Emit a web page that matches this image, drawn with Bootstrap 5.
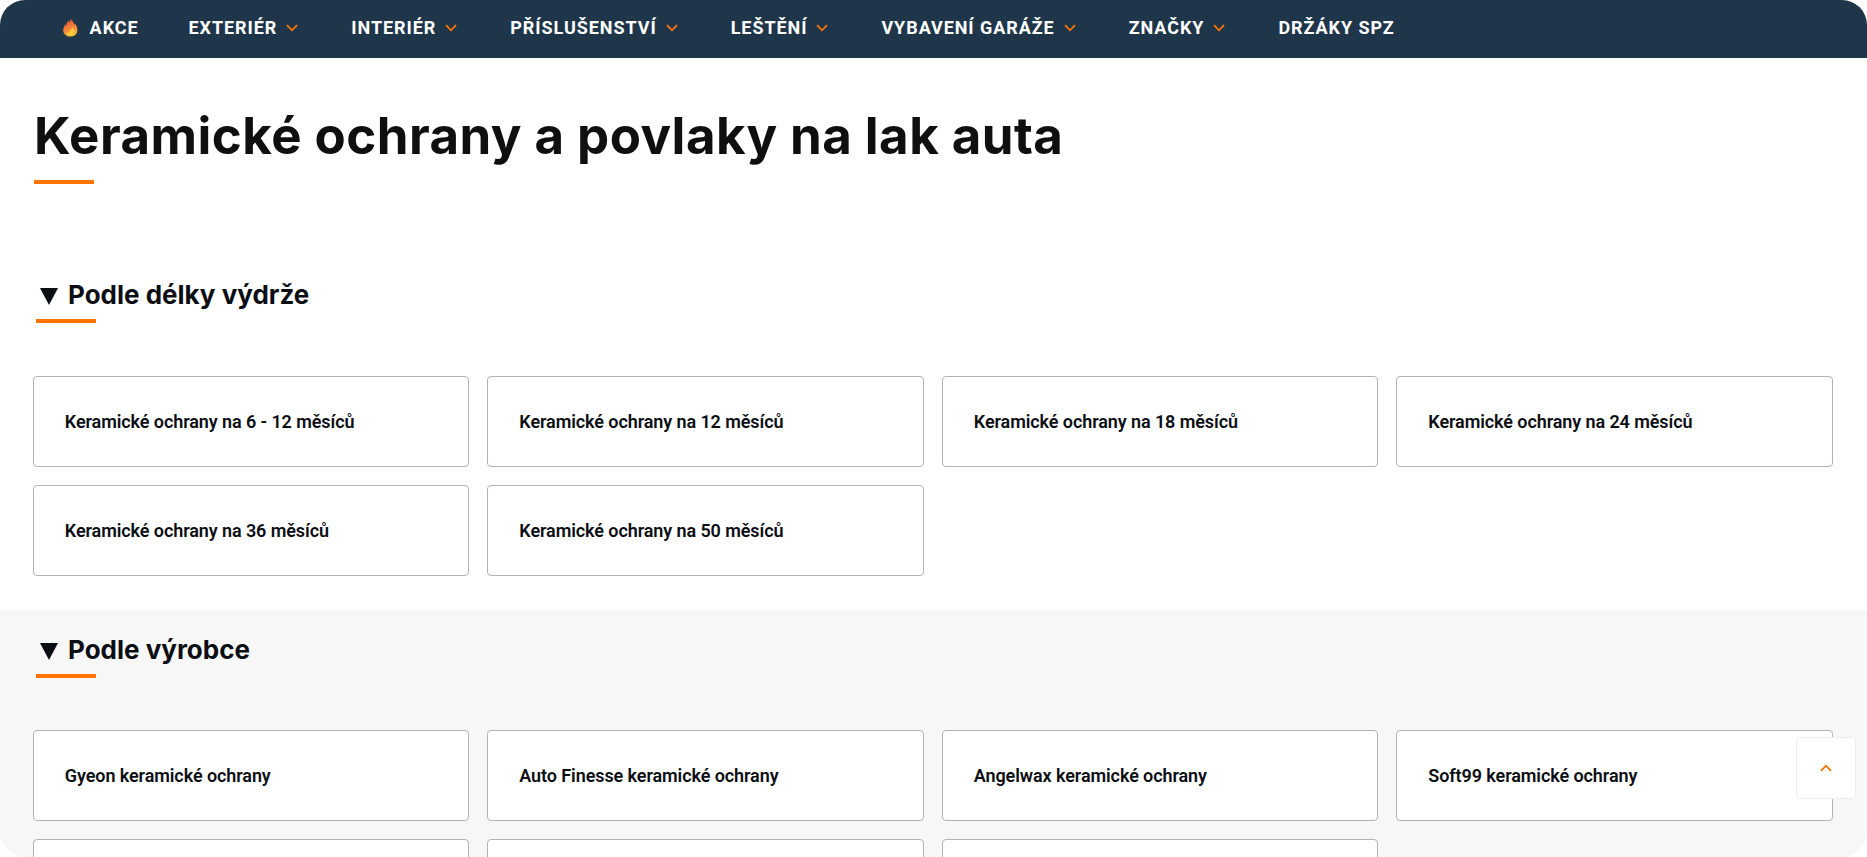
<!DOCTYPE html>
<html lang="cs">
<head>
<meta charset="utf-8">
<meta name="viewport" content="width=device-width, initial-scale=1">
<title>Keramické ochrany a povlaky na lak auta</title>
<link href="https://cdn.jsdelivr.net/npm/bootstrap@5.3.0/dist/css/bootstrap.min.css" rel="stylesheet">
<style>
body { background: #fff; font-family: Roboto, "Liberation Sans", sans-serif; color: #0b0e13; }
.page-shell { height: 857px; border-radius: 25px; }
.main-bar { background: #1f364a; height: 58px; padding: 0 0 0 38px; }
.main-bar .nav-link { color: #fff; font-size: 18px; font-weight: 700; line-height: 24px; letter-spacing: .94px; padding: 16px 25px 18px; white-space: nowrap; }
.chev { width: 12px; height: 8px; margin-left: 9px; margin-right: 3px; fill: none; stroke: #ff7300; stroke-width: 1.8; }
.flame { width: 15px; height: 18px; margin-right: 11.6px; }
.title-font { font-family: Inter, "Noto Sans", sans-serif; font-weight: 700; margin: 0; white-space: nowrap; }
.title-font::after { content: ""; display: block; width: 60px; height: 4px; background: #ff7300; }
h1.title-font { font-size: 51px; line-height: 60px; padding: 48px 0 0 34px; height: 202px; color: #0f0f0f; letter-spacing: .45px; }
h1.title-font::after { margin-top: 14px; }
h2.title-font { font-size: 26px; line-height: 36px; padding: 17px 0 0 36px; height: 116px; }
h2.title-font::after { margin-top: 6px; }
.group-alt h2.title-font { padding-top: 22px; height: 120.4px; }
.tri { width: 18px; height: 18px; margin: 0 10px 0 4px; fill: #0b0e13; }
.group-first { height: 350px; }
.group-alt { background: #f7f7f7; height: 247px; }
.tiles { --bs-gutter-x: 18px; --bs-gutter-y: 18px; margin-left: 23.5px; margin-right: 25.5px; }
.tile { height: 91px; border: 1px solid #b3b3b3; border-radius: 4px; padding: 0 31.3px; font-size: 18px; font-weight: 600; letter-spacing: -.09px; color: #0b0e13; }
.to-top { position: fixed; left: 1796px; top: 737px; width: 60px; height: 62px; background: #fff; border: 1px solid #ededed; border-radius: 4px; }
</style>
</head>
<body>
<div class="page-shell overflow-hidden">
  <nav class="main-bar">
    <ul class="nav flex-nowrap">
      <li><a class="nav-link d-flex align-items-center" href="#"><svg class="flame" viewBox="0 0 15 18"><defs><linearGradient id="fire" x1="0" y1="0" x2=".4" y2="1"><stop offset="0" stop-color="#e64535"/><stop offset=".5" stop-color="#f2783a"/><stop offset="1" stop-color="#f9b03a"/></linearGradient></defs><path fill="url(#fire)" d="M7.2 0C9.8 1.8 11 3.8 11.2 6.2L12 4.6C14 7 14.8 9.500 14.200 12.500C13.600 16 11 17.500 7.500 17.500C3.500 17.500.5 15.500.3 12C.1 9.500 1 7.200 2.300 5.300L3 7.400C3.100 5 4.200 3 5.600 1.800L6.100 3.500C7 2.500 7.300 1.300 7.200 0Z"/><path fill="#fdca3c" d="M9.200 7.500C9.500 9.500 11.800 10.500 11.600 13.500C11.400 16 9.700 17 7.600 17C5 17 3.600 15.600 3.700 13.500L5.300 14C6.500 12.500 9.200 10.500 9.200 7.500Z"/></svg>AKCE</a></li>
      <li><a class="nav-link d-flex align-items-center" href="#">EXTERIÉR<svg class="chev" viewBox="0 0 12 8"><path d="M1 1.200 6 6.300 11 1.200"/></svg></a></li>
      <li><a class="nav-link d-flex align-items-center" href="#">INTERIÉR<svg class="chev" viewBox="0 0 12 8"><path d="M1 1.200 6 6.300 11 1.200"/></svg></a></li>
      <li><a class="nav-link d-flex align-items-center" href="#">PŘÍSLUŠENSTVÍ<svg class="chev" viewBox="0 0 12 8"><path d="M1 1.200 6 6.300 11 1.200"/></svg></a></li>
      <li><a class="nav-link d-flex align-items-center" href="#">LEŠTĚNÍ<svg class="chev" viewBox="0 0 12 8"><path d="M1 1.200 6 6.300 11 1.200"/></svg></a></li>
      <li><a class="nav-link d-flex align-items-center" href="#">VYBAVENÍ GARÁŽE<svg class="chev" viewBox="0 0 12 8"><path d="M1 1.200 6 6.300 11 1.200"/></svg></a></li>
      <li><a class="nav-link d-flex align-items-center" href="#">ZNAČKY<svg class="chev" viewBox="0 0 12 8"><path d="M1 1.200 6 6.300 11 1.200"/></svg></a></li>
      <li><a class="nav-link d-flex align-items-center" href="#">DRŽÁKY SPZ</a></li>
    </ul>
  </nav>
  <main>
    <h1 class="title-font">Keramické ochrany a povlaky na lak auta</h1>
    <section class="group-first">
      <h2 class="title-font"><svg class="tri" viewBox="0 0 18 18"><path d="M0 0H18L9 17Z"/></svg>Podle délky výdrže</h2>
      <div class="row row-cols-4 tiles">
        <div><a class="tile d-flex align-items-center bg-white text-decoration-none" href="#">Keramické ochrany na 6 - 12 měsíců</a></div>
        <div><a class="tile d-flex align-items-center bg-white text-decoration-none" href="#">Keramické ochrany na 12 měsíců</a></div>
        <div><a class="tile d-flex align-items-center bg-white text-decoration-none" href="#">Keramické ochrany na 18 měsíců</a></div>
        <div><a class="tile d-flex align-items-center bg-white text-decoration-none" href="#">Keramické ochrany na 24 měsíců</a></div>
        <div><a class="tile d-flex align-items-center bg-white text-decoration-none" href="#">Keramické ochrany na 36 měsíců</a></div>
        <div><a class="tile d-flex align-items-center bg-white text-decoration-none" href="#">Keramické ochrany na 50 měsíců</a></div>
      </div>
    </section>
    <section class="group-alt">
      <h2 class="title-font"><svg class="tri" viewBox="0 0 18 18"><path d="M0 0H18L9 17Z"/></svg>Podle výrobce</h2>
      <div class="row row-cols-4 tiles">
        <div><a class="tile d-flex align-items-center bg-white text-decoration-none" href="#">Gyeon keramické ochrany</a></div>
        <div><a class="tile d-flex align-items-center bg-white text-decoration-none" href="#">Auto Finesse keramické ochrany</a></div>
        <div><a class="tile d-flex align-items-center bg-white text-decoration-none" href="#">Angelwax keramické ochrany</a></div>
        <div><a class="tile d-flex align-items-center bg-white text-decoration-none" href="#">Soft99 keramické ochrany</a></div>
        <div><a class="tile d-flex bg-white" href="#" aria-hidden="true"></a></div>
        <div><a class="tile d-flex bg-white" href="#" aria-hidden="true"></a></div>
        <div><a class="tile d-flex bg-white" href="#" aria-hidden="true"></a></div>
      </div>
    </section>
  </main>
</div>
<a class="to-top d-flex align-items-center justify-content-center" href="#" aria-label="Nahoru"><svg class="chev m-0" viewBox="0 0 12 8"><path d="M1 6.800 6 1.700 11 6.800"/></svg></a>
<script src="https://cdn.jsdelivr.net/npm/bootstrap@5.3.0/dist/js/bootstrap.bundle.min.js"></script>
</body>
</html>
